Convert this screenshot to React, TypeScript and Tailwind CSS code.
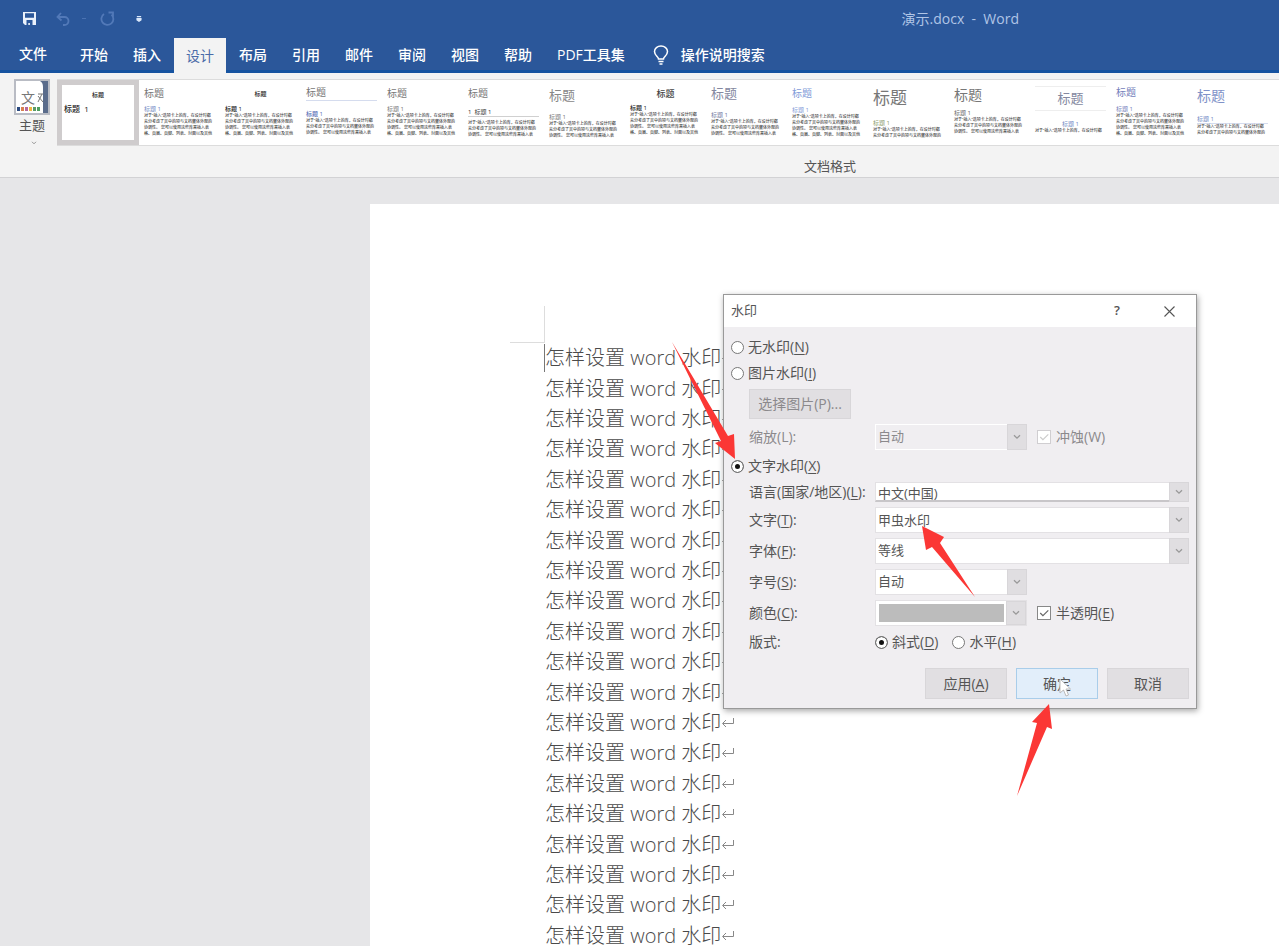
import React, { useState } from "react";

const UI_FONT = "font-['Open_Sans','Noto_Sans_CJK_SC',sans-serif]";

const tabs = ["开始", "插入", "设计", "布局", "引用", "邮件", "审阅", "视图", "帮助", "PDF工具集"];

const sample = [
  "对于“插入”选项卡上的库，在设计时都",
  "充分考虑了其中的项与文档整体外观的",
  "协调性。 您可以使用这些库来插入表",
  "格、页眉、页脚、列表、封面以及其他",
];

type StyleItem = { title: string; sub: string; lines: number; subText?: string };

const gallery: StyleItem[] = [
  { lines: 4, title: "h-[20px] text-[10px] text-[#777]", sub: "h-[10px] text-[#7089c4]" },
  { lines: 4, title: "h-[22px] text-[6px] justify-center font-medium text-[#222]", sub: "h-[8px] font-medium text-[#222]" },
  { lines: 3, title: "h-[18px] text-[10px] text-[#777] border-b border-[#d5dcee]", sub: "h-[17px] font-medium text-[#5a72b8]" },
  { lines: 4, title: "h-[20px] text-[10px] text-[#777]", sub: "h-[10px] text-[#777]" },
  { lines: 3, title: "h-[20px] text-[10px] text-[#777]", sub: "h-[14px] mb-[3px] text-[#333] border-b border-[#d0d0d0]", subText: "1  标题 1" },
  { lines: 3, title: "h-[24px] text-[13px] text-[#888]", sub: "h-[14px] text-[#777]" },
  { lines: 4, title: "h-[20px] text-[9px] justify-center font-medium text-[#444]", sub: "h-[9px] font-medium text-[#222]" },
  { lines: 3, title: "h-[20px] text-[13px] text-[#8488a0]", sub: "h-[16px] text-[#7078a0]" },
  { lines: 4, title: "h-[20px] text-[10px] text-[#7f9bd8]", sub: "h-[11px] text-[#7f9bd8]" },
  { lines: 2, title: "h-[28px] text-[17px] text-[#777]", sub: "h-[16px] text-[#8a9a6a]" },
  { lines: 3, title: "h-[24px] text-[14px] text-[#777]", sub: "h-[10px] text-[#666]" },
  { lines: 1, title: "h-[25px] mt-[3px] text-[13px] justify-center text-[#8488a0] border-y border-[#eee]", sub: "h-[17px] justify-center text-[#7089c4]" },
  { lines: 4, title: "h-[18px] text-[10px] text-[#7480bb]", sub: "h-[12px] text-[#7480bb]" },
  { lines: 2, title: "h-[26px] text-[14px] text-[#7f92c8]", sub: "h-[15px] text-[#7089c4] border-b border-[#d5dcee]" },
];

const Chevron = ({ className = "" }: { className?: string }) => (
  <svg viewBox="0 0 8 6" className={className} fill="none" stroke="currentColor" strokeWidth="1.3">
    <path d="M1 1.2 4 4.2 7 1.2" />
  </svg>
);

const TitleBar = () => (
  <div className="flex h-[37px] items-center">
    <div className="flex flex-1 items-center pl-[22px]">
      <button aria-label="保存" className="mr-[19px]">
        <svg viewBox="0 0 15 15" className="size-[15px]" fill="#eaf1fb">
          <path fillRule="evenodd" d="M1 1h13v13H3L1 12zM3 2.2v4.6h9V2.2zM4.5 9v5h1.8v-2h1.6v2h2.6V9z" />
        </svg>
      </button>
      <button aria-label="撤消" className="text-[#5279b8]">
        <svg viewBox="0 0 14 14" className="size-[14px]" fill="none" stroke="currentColor" strokeWidth="1.8">
          <path d="M5 1 1.5 5 5.5 8.5M2 5h6.5a4 4 0 0 1 0 8H7" />
        </svg>
      </button>
      <span className="mx-[12px] h-px w-[4px] bg-[#4a72b2]" />
      <button aria-label="重复" className="mr-[21px] ml-[2px] text-[#5279b8]">
        <svg viewBox="0 0 15 15" className="size-[15px]" fill="none" stroke="currentColor" strokeWidth="1.8">
          <path d="M4 3a6 6 0 1 0 7.5.6M8.500 1.500h4.500v4.500" />
        </svg>
      </button>
      <button aria-label="自定义快速访问工具栏">
        <svg viewBox="0 0 7 7" className="size-[6px]" fill="#dbe8fa">
          <path d="M1 0h5v1.400H1zM.5 2.400h6V5L3.500 7 .5 5z" />
        </svg>
      </button>
    </div>
    <h1 className="mr-[260px] text-sm whitespace-pre text-[#b0c5e6]">{"演示.docx  -  Word"}</h1>
  </div>
);

const TabRow = () => {
  const [active, setActive] = useState("设计");
  return (
    <nav className="mt-px flex h-[35px] items-stretch gap-px border-b-[3px] border-[#1653a0] text-sm font-medium text-white">
      <button className="w-[67px] pr-px">文件</button>
      {tabs.map((tab) => (
        <button
          key={tab}
          onClick={() => setActive(tab)}
          className={tab === active ? "-mb-[3px] bg-[#f3f3f3] px-3 font-normal text-[#4a6ba8]" : "px-3 pt-px whitespace-nowrap"}
        >
          {tab}
        </button>
      ))}
      <button className="ml-[15px] flex items-center gap-[12px] pt-px whitespace-nowrap">
        <svg viewBox="0 0 16 20" className="h-[20px] w-[16px]" fill="none" stroke="currentColor" strokeWidth="1.5">
          <path d="M5.500 14c0-2.500-4-3.500-4-7.500a6.500 5.500 0 0 1 13 0c0 4-4 5-4 7.500zM5.500 16.500h5M6.500 19h3" />
        </svg>
        操作说明搜索
      </button>
    </nav>
  );
};

const StyleCard = ({ item }: { item: StyleItem }) => (
  <button className="flex w-[81px] shrink-0 flex-col px-[5px] pt-[3px] text-left">
    <span className={`flex w-full shrink-0 items-center leading-none ${item.title}`}>标题</span>
    <span className={`flex w-full shrink-0 items-end text-[6px] leading-[8px] whitespace-pre ${item.sub}`}>{item.subText ?? "标题 1"}</span>
    {sample.slice(0, item.lines).map((line) => (
      <span key={line} className="block text-[4px] leading-[6px] font-medium whitespace-nowrap text-[#444]">
        {line}
      </span>
    ))}
  </button>
);

const Ribbon = () => (
  <section className="border-b border-[#d2d2d4] bg-[#f3f3f3]">
    <div className="flex h-[73px] pt-[6px]">
      <button className="flex w-[57px] shrink-0 flex-col items-center pl-[7px] text-[#555]">
        <svg viewBox="0 0 36 36" className="size-[36px] shrink-0">
          <rect x="1" y="1" width="34" height="34" fill="#fff" stroke="#b9bcc4" strokeWidth="2" />
          <path d="M26 2h8v32h-5V8c0-3-1-5-3-6z" fill="#5a6c8c" />
          <text x="7" y="24" fontSize="14" fill="#777" fontFamily="Noto Sans CJK SC">文</text>
          <path d="M24 15h5M28 15l-4 8M24 17l5 6" stroke="#777" fill="none" />
          <path d="M3 28h3v4H3z" fill="#2b4a80" />
          <path d="M7 28h3v4H7z" fill="#d98050" />
          <path d="M11 28h3v4h-3z" fill="#b76a9c" />
          <path d="M15 28h3v4h-3z" fill="#f0b840" />
          <path d="M19 28h3v4h-3z" fill="#5b9a68" />
          <path d="M23 28h3v4h-3z" fill="#4fa060" />
        </svg>
        <span className="text-[13px] leading-[20px]">主题</span>
        <Chevron className="mt-[6px] ml-[4px] h-[4px] w-[6px] shrink-0 text-[#888]" />
      </button>
      <div className="flex min-w-0 flex-1 overflow-hidden border-y border-[#dcdcdc] bg-white">
        <button className="flex w-[82px] shrink-0 flex-col border-[5px] border-[#cfcccd] px-[2px] pt-[6px] text-left text-[#222]">
          <span className="self-center text-[6px] leading-[8px] font-medium">标题</span>
          <span className="pt-[4px] text-[8px] leading-[12px] font-medium">标题&nbsp; 1</span>
        </button>
        {gallery.map((item, i) => (
          <StyleCard key={i} item={item} />
        ))}
      </div>
    </div>
    <p className="h-[31px] pt-[8px] pl-[381px] text-center text-[13px] leading-[24px] text-[#555]">文档格式</p>
  </section>
);

const DocumentPage = () => (
  <main className="flex-1 overflow-hidden bg-[#e6e6e8] pt-[26px] pl-[370px]">
    <article className="h-full bg-white pt-[102px]">
      <div className="ml-[140px] h-[37px] w-[35px] border-r border-b border-[#ddd]" />
      <div className="grid h-[608px] auto-rows-fr pl-[174px] text-[20px] text-[#4a4a4a] font-light">
        {Array.from({ length: 20 }, (_, i) => (
          <p key={i} className="flex items-center leading-[28px] whitespace-pre">
            <span className={i === 0 ? "border-l border-[#777]" : "border-l border-transparent"}>怎样设置 word 水印</span>
            <svg viewBox="0 0 14 12" className="h-[12px] w-[14px] text-[#888]" fill="none" stroke="currentColor">
              <path d="M12.500 1v5.500H2M5 3 1.500 6.500 5 10" />
            </svg>
          </p>
        ))}
      </div>
    </article>
  </main>
);

const Key = ({ children }: { children: string }) => (
  <>
    (<span className="underline underline-offset-2">{children}</span>)
  </>
);

const radioClass =
  "size-[13px] shrink-0 appearance-none rounded-full border border-[#777] bg-white checked:bg-[#111] checked:shadow-[inset_0_0_0_3px_white]";

type RadioProps = { name: string; defaultChecked?: boolean; children: React.ReactNode };

const Radio = ({ name, defaultChecked, children }: RadioProps) => (
  <label className="flex h-[26px] items-center gap-1">
    <input type="radio" name={name} defaultChecked={defaultChecked} className={radioClass} />
    <span>{children}</span>
  </label>
);

const Check = ({ disabled, children }: { disabled?: boolean; children: React.ReactNode }) => (
  <label className={`ml-[10px] flex items-center gap-[5px] ${disabled ? "text-[#8b898c]" : ""}`}>
    <span className="relative flex">
      <input
        type="checkbox"
        defaultChecked
        disabled={disabled}
        className="peer size-[14px] appearance-none border border-[#888] bg-white disabled:border-[#d0ced1]"
      />
      <svg
        viewBox="0 0 13 13"
        className="pointer-events-none absolute inset-0 hidden size-[14px] text-[#666] peer-checked:block peer-disabled:text-[#ccc]"
        fill="none"
        stroke="currentColor"
        strokeWidth="1.1"
      >
        <path d="m3 6.500 2.500 2.500L10.500 4" />
      </svg>
    </span>
    <span>{children}</span>
  </label>
);

const ArrowBox = () => (
  <span className="pointer-events-none absolute inset-y-0 right-0 flex w-[20px] items-center justify-center border border-[#d8d6d9] bg-[#e0dee1] text-[#999]">
    <Chevron className="h-[6px] w-[8px]" />
  </span>
);

type ComboProps = { id: string; value: string; short?: boolean; disabled?: boolean; thin?: boolean };

const Combo = ({ id, value, short, disabled, thin }: ComboProps) => (
  <div className={`relative ${short ? "w-[152px]" : "flex-1"} ${thin ? "h-[20px]" : "h-[26px]"}`}>
    <select
      id={id}
      disabled={disabled}
      className={`block size-full appearance-none border px-[2px] text-[13px] leading-[20px] ${
        disabled ? "border-white bg-[#f0eef1] text-[#8b898c] opacity-100" : "border-[#e3e1e4] bg-white"
      } ${thin ? "border-b-2 border-b-[#c8c6c9]" : "pb-[2px]"}`}
    >
      <option>{value}</option>
    </select>
    <ArrowBox />
  </div>
);

type FieldProps = { id?: string; label: React.ReactNode; className?: string; children: React.ReactNode };

const Field = ({ id, label, className = "", children }: FieldProps) => (
  <div className={`flex items-center pl-[18px] ${className}`}>
    <label htmlFor={id} className="w-[126px] shrink-0 whitespace-nowrap">
      {label}
    </label>
    {children}
  </div>
);

const buttonClass = "h-[31px] w-[82px] border border-[#d8d6d9] bg-[#e1dfe2]";

const WatermarkDialog = () => {
  const [text, setText] = useState("甲虫水印");

  return (
    <div
      role="dialog"
      aria-label="水印"
      className="absolute top-[294px] left-[723px] w-[474px] border border-[#999] bg-[#f0eef1] text-[#555] shadow-[1px_2px_6px_rgba(0,0,0,0.35)]"
    >
      <div className="flex h-[32px] items-center bg-white pl-[7px]">
        <h2 className="flex-1 text-[13px]">水印</h2>
        <button aria-label="帮助" className="w-[20px] text-[13px] font-semibold">?</button>
        <button aria-label="关闭" className="mr-[21px] ml-[37px]">
          <svg viewBox="0 0 11 11" className="size-[11px]" fill="none" stroke="currentColor" strokeWidth="1.1">
            <path d="m.5.5 10 10M10.500.5l-10 10" />
          </svg>
        </button>
      </div>
      <form className="px-[7px] pt-[7px] pb-[9px] text-[14px] leading-[20px]" onSubmit={(e) => e.preventDefault()}>
        <Radio name="kind">无水印<Key>N</Key></Radio>
        <Radio name="kind">图片水印<Key>I</Key></Radio>
        <button type="button" disabled className="mt-[3px] ml-[18px] block h-[30px] w-[102px] border border-[#d8d6d9] bg-[#e1dfe2] text-[#8b898c]">
          选择图片(P)...
        </button>
        <Field id="scale" className="mt-[5px] [&>label:first-child]:text-[#8b898c]" label="缩放(L):">
          <Combo id="scale" value="自动" short disabled />
          <Check disabled>冲蚀(W)</Check>
        </Field>
        <div className="mt-[3px]">
          <Radio name="kind" defaultChecked>文字水印<Key>X</Key></Radio>
        </div>
        <Field id="lang" className="mt-[3px]" label={<>语言(国家/地区)<Key>L</Key>:</>}>
          <Combo id="lang" value="中文(中国)" thin />
        </Field>
        <Field id="text" className="mt-[5px]" label={<>文字<Key>T</Key>:</>}>
          <div className="relative h-[26px] flex-1">
            <input
              id="text"
              value={text}
              onChange={(e) => setText(e.target.value)}
              className="block size-full border border-[#e3e1e4] bg-white px-[2px] pb-[2px] text-[13px]"
            />
            <ArrowBox />
          </div>
        </Field>
        <Field id="font" className="mt-[5px]" label={<>字体<Key>F</Key>:</>}>
          <Combo id="font" value="等线" />
        </Field>
        <Field id="size" className="mt-[5px]" label={<>字号<Key>S</Key>:</>}>
          <Combo id="size" value="自动" short />
        </Field>
        <Field id="color" className="mt-[5px]" label={<>颜色<Key>C</Key>:</>}>
          <button id="color" type="button" className="relative h-[26px] w-[152px] border border-[#e3e1e4] bg-white py-[3px] pr-[22px] pl-[3px]">
            <span className="block h-full bg-[#bcbcbc]" />
            <ArrowBox />
          </button>
          <Check>半透明<Key>E</Key></Check>
        </Field>
        <Field className="mt-[3px]" label="版式:">
          <div className="flex gap-[14px]">
            <Radio name="layout" defaultChecked>斜式<Key>D</Key></Radio>
            <Radio name="layout">水平<Key>H</Key></Radio>
          </div>
        </Field>
        <div className="mt-[13px] flex justify-end gap-[9px]">
          <button type="button" className={buttonClass}>应用<Key>A</Key></button>
          <button type="submit" className="h-[31px] w-[82px] border border-[#a9cdea] bg-[#e2eefa]">确定</button>
          <button type="button" className={buttonClass}>取消</button>
        </div>
      </form>
    </div>
  );
};

const Annotations = () => (
  <>
    <svg viewBox="672 342 380 454" className="pointer-events-none absolute top-[342px] left-[672px] h-[454px] w-[380px]" fill="#fb3735">
      <path d="M672 342 728 436 734 434 735 459 715 443 721 441Z" />
      <path d="M922 526 944 537 940 543 975 597 932 547 926 550Z" />
      <path d="M1049 704 1052 729 1047 727 1017 796 1037 723 1032 722Z" />
    </svg>
    <svg viewBox="0 0 13 20" className="pointer-events-none absolute top-[678px] left-[1059px] h-[20px] w-[13px]" fill="#fff" stroke="#bbb">
      <path d="M1 1v14l3.500-3 2.500 6 2.500-1-2.500-6h4.500z" />
    </svg>
  </>
);

export default function App() {
  return (
    <div className={`relative flex h-screen flex-col overflow-hidden ${UI_FONT}`}>
      <header className="bg-[#2b579a]">
        <TitleBar />
        <TabRow />
      </header>
      <Ribbon />
      <DocumentPage />
      <WatermarkDialog />
      <Annotations />
    </div>
  );
}
